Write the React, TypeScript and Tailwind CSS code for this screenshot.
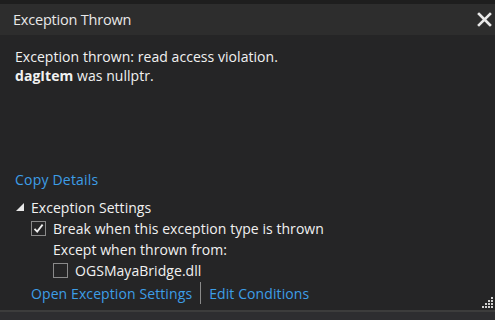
import React from "react";

function CloseIcon() {
  return (
    <svg width="15" height="15" viewBox="0 0 15 15">
      <path d="M2 2 L13 13 M13 2 L2 13" stroke="#e8e8e8" strokeWidth="2.6" strokeLinecap="square" />
    </svg>
  );
}

function Grip() {
  const dots = [
    [8, 0], [8, 3], [5, 3], [8, 6], [5, 6], [2, 6], [8, 9], [5, 9], [2, 9], [-1, 9],
  ];
  return (
    <svg width="11" height="11" viewBox="-1 0 11 11">
      {dots.map(([x, y], i) => (
        <rect key={i} x={x} y={y} width="2" height="2" fill="#d0d0d0" />
      ))}
    </svg>
  );
}

function Checkbox({ checked }: { checked?: boolean }) {
  return (
    <div className="w-[15px] h-[15px] border border-[#8a8a8a] bg-[#252526] flex items-center justify-center shrink-0">
      {checked && (
        <svg width="11" height="11" viewBox="0 0 11 11">
          <path d="M1.5 5.8 L4.2 8.6 L9.6 1.6" stroke="#f0f0f0" strokeWidth="1.8" fill="none" />
        </svg>
      )}
    </div>
  );
}

export default function App() {
  return (
    <div
      className="w-[495px] h-[320px] bg-[#1f1f1f] flex flex-col text-[#f1f1f1] overflow-hidden"
      style={{ fontFamily: '"Open Sans", "Noto Sans", sans-serif' }}
    >
      <div className="h-[4px] bg-[#1e1e1e]" />
      <div className="h-[31px] bg-[#2d2d2d] flex items-center justify-between pl-[13px] pr-[3px]">
        <span className="text-[14.5px] text-[#e8e8e8] tracking-[-0.2px]">Exception Thrown</span>
        <CloseIcon />
      </div>
      <div className="flex-1 bg-[#252526] relative flex flex-col px-[15px] pt-[12px] text-[14px] tracking-[0.05px]">
        <div className="leading-[19px]">Exception thrown: read access violation.</div>
        <div className="leading-[19px]">
          <span className="font-bold">dagItem</span> was nullptr.
        </div>
        <div className="mt-[85px] leading-[20px] text-[#3d9ee6] tracking-[0.2px]">Copy Details</div>
        <div className="mt-[7px] flex items-center h-[20px]">
          <svg width="8" height="8" viewBox="0 0 8 8" className="ml-[1px] mr-[7px]">
            <path d="M8 0 L8 8 L0 8 Z" fill="#e8e8e8" />
          </svg>
          <span>Exception Settings</span>
        </div>
        <div className="mt-[1px] pl-[16px] flex items-center gap-[7px] h-[21px]">
          <Checkbox checked />
          <span>Break when this exception type is thrown</span>
        </div>
        <div className="pl-[38px] h-[21px] flex items-center">Except when thrown from:</div>
        <div className="pl-[38px] flex items-center gap-[7px] h-[20px]">
          <Checkbox />
          <span>OGSMayaBridge.dll</span>
        </div>
        <div className="mt-[2px] pl-[16px] flex items-center h-[22px] text-[#3d9ee6] tracking-[0.1px]">
          <span>Open Exception Settings</span>
          <div className="w-[1px] h-[22px] bg-[#8a8a8a] mx-[8px]" />
          <span>Edit Conditions</span>
        </div>
        <div className="absolute right-[2px] bottom-[2px]">
          <Grip />
        </div>
      </div>
      <div className="h-[2px] bg-[#3c3c3c]" />
      <div className="h-[8px] bg-[#2d2d30]" />
    </div>
  );
}
